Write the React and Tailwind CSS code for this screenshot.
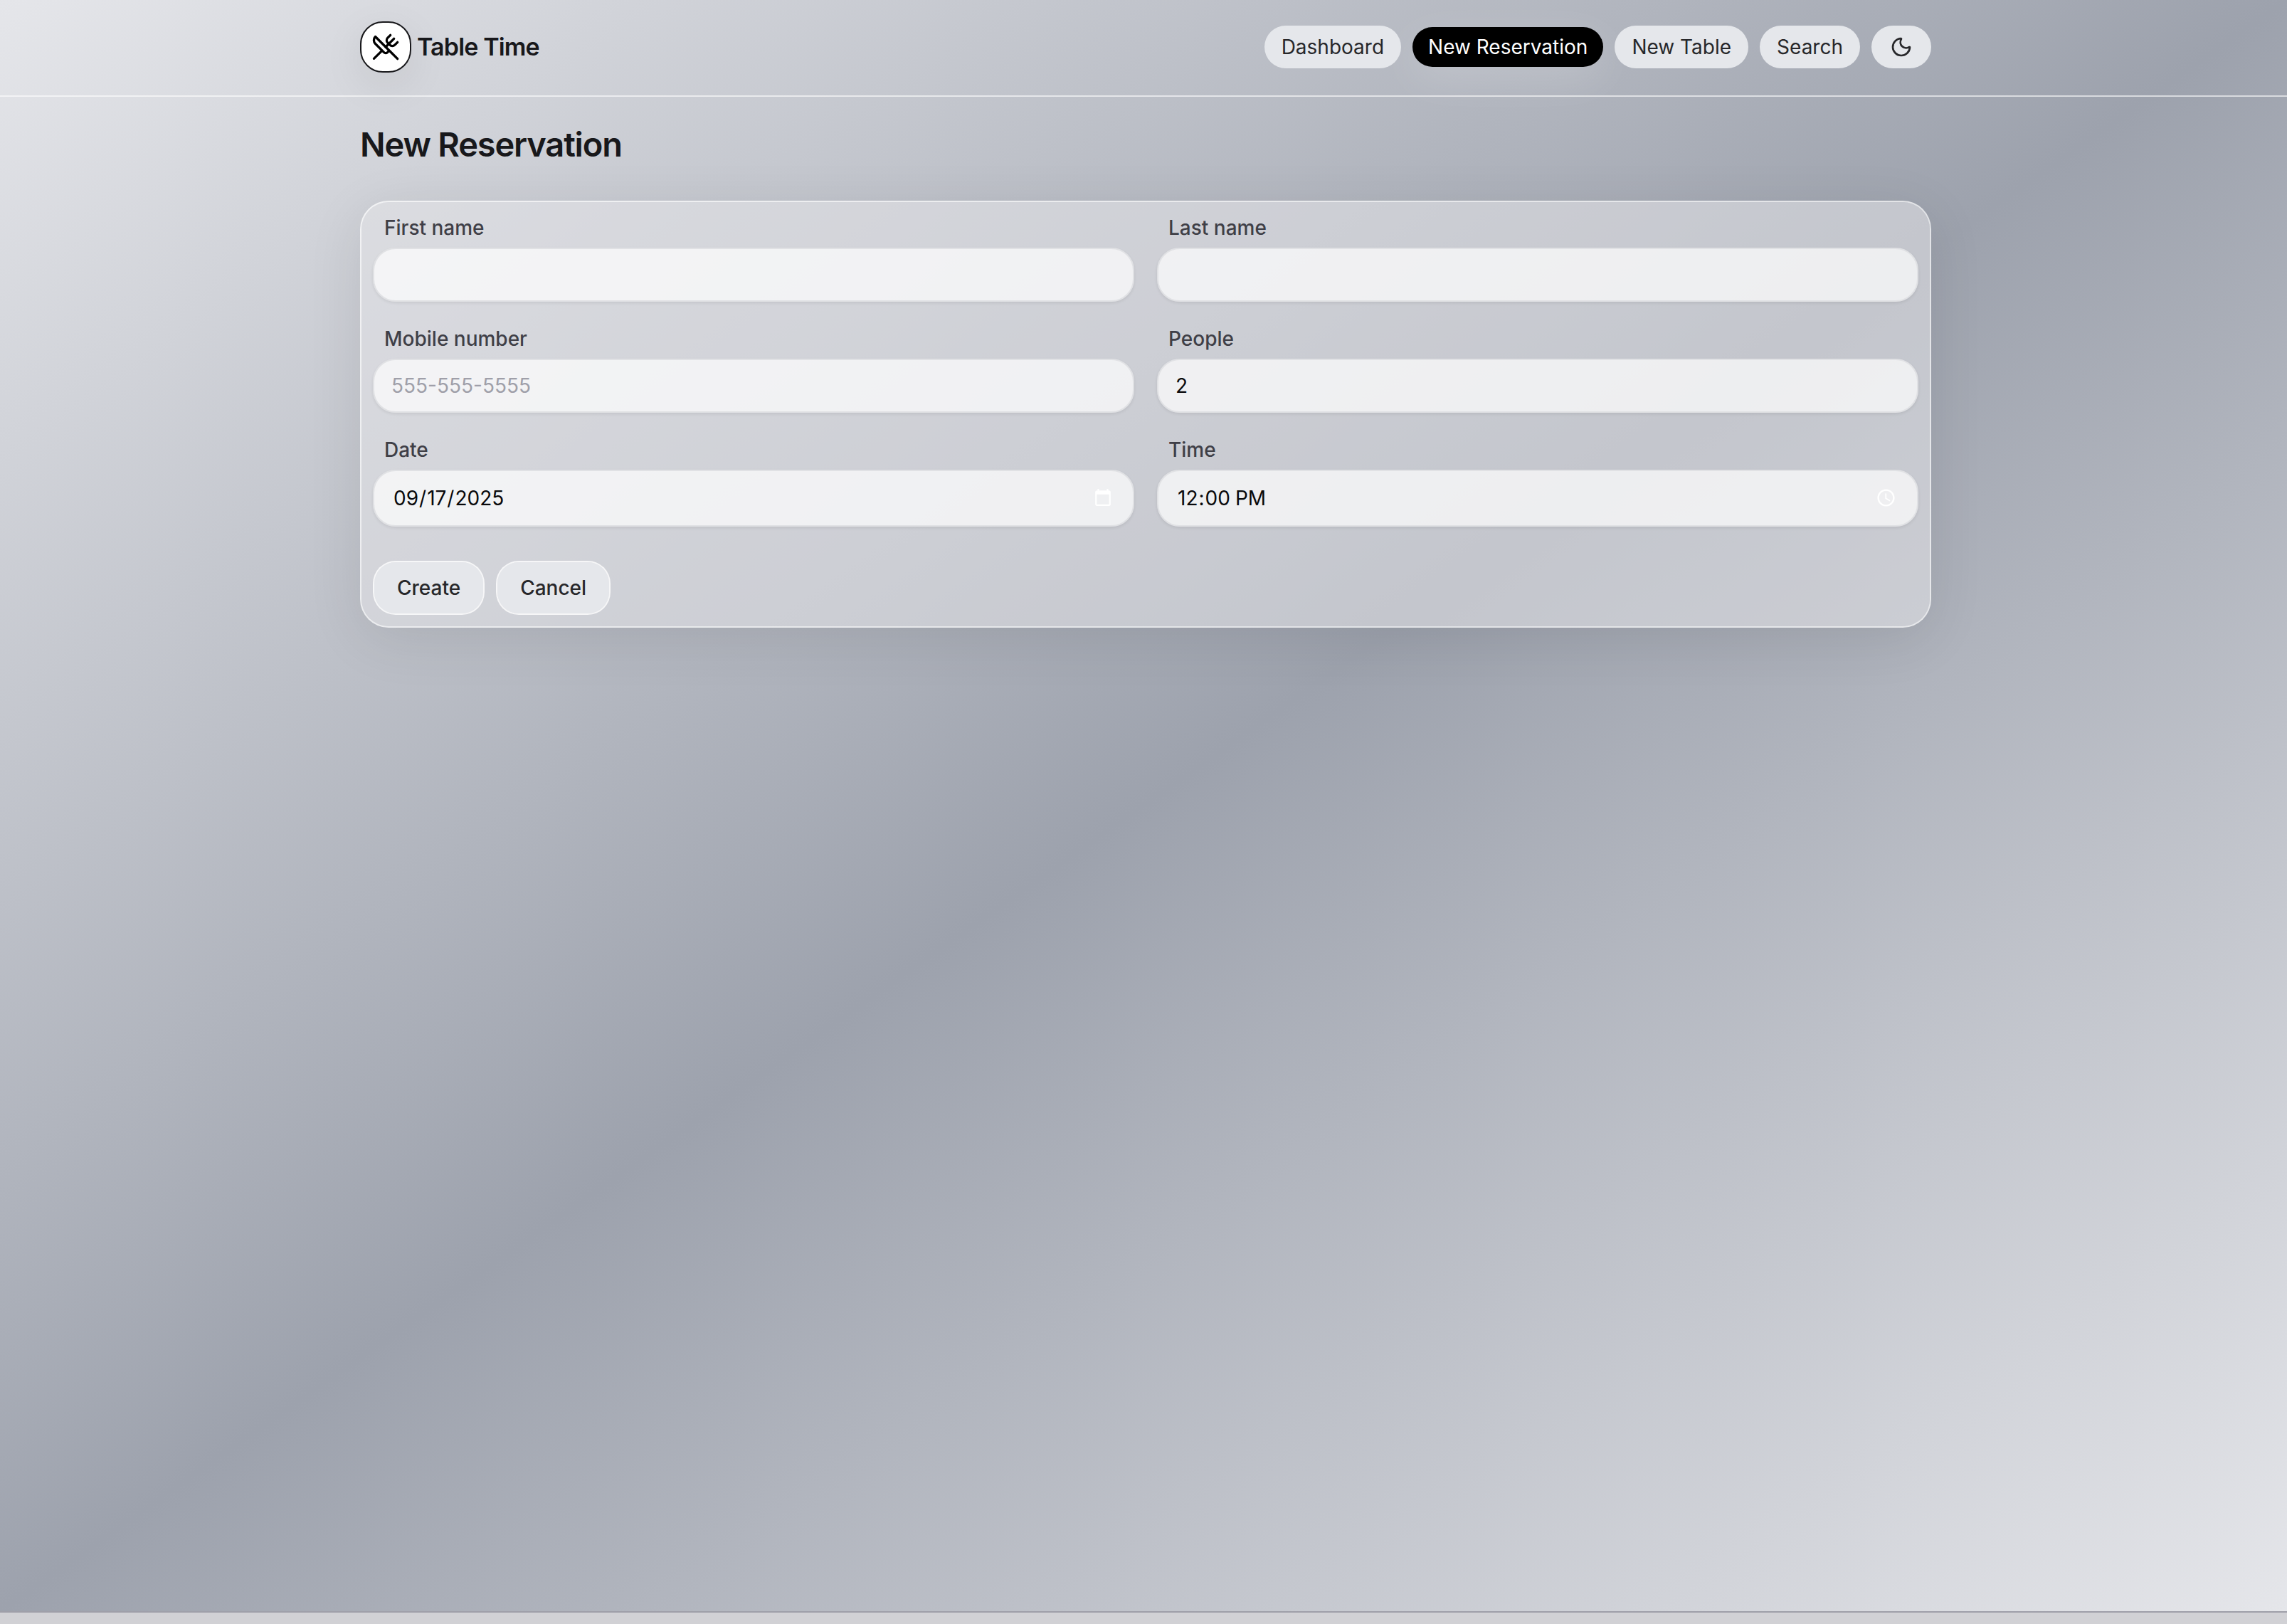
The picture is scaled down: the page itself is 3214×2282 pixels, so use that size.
import { Moon, UtensilsCrossed } from "lucide-react";

const container = "mx-auto w-full max-w-[2310px] pl-[54px] pr-12";
const pill =
  "rounded-full border-2 border-gray-200/60 bg-gray-200 bg-clip-border px-[22px] py-2 text-zinc-800";
const fieldBase =
  "w-full rounded-[32px] border-2 border-[#e0e1e4] bg-white/70 text-[28px] leading-10 text-zinc-950 shadow-[0_2px_4px_rgba(0,0,0,0.08)] outline-none placeholder:text-zinc-400 [&::-webkit-calendar-picker-indicator]:invert";
const button =
  "rounded-[32px] border-2 border-white/80 bg-gray-200 bg-clip-padding px-8 py-4 text-[28px] leading-10 font-medium text-zinc-800";

function Field({ id, label, tall, ...props }) {
  return (
    <div className="flex flex-col gap-2">
      <label htmlFor={id} className="px-4 text-[28px] leading-10 font-medium text-zinc-700">
        {label}
      </label>
      <input id={id} className={`${fieldBase} ${tall ? "h-20 px-[26px]" : "h-[76px] px-6"}`} {...props} />
    </div>
  );
}

export default function App() {
  return (
    <div className="flex min-h-screen flex-col font-['Inter',sans-serif] text-zinc-900">
      <div className="flex-1 bg-linear-to-br/srgb from-[#e5e6ea] via-[#9da2ad] to-[#e5e6ea]">
        <header className="border-b-2 border-white/60">
          <div className={`${container} flex items-center justify-between pt-[30px] pb-8`}>
            <a href="#" className="flex items-center gap-2">
              <span className="flex size-[72px] items-center justify-center rounded-[32px] border-2 border-zinc-900 bg-white text-black shadow-[0_16px_60px_rgba(0,0,0,0.08)]">
                <UtensilsCrossed size={40} />
              </span>
              <span className="text-[34px] leading-10 font-semibold tracking-tight">Table Time</span>
            </a>
            <nav className="flex items-center gap-4 text-[28px] leading-10">
              <a href="#" className={pill}>Dashboard</a>
              <a
                href="#"
                aria-current="page"
                className="rounded-full bg-black px-[22px] py-2 text-white shadow-[0_16px_60px_rgba(255,255,255,0.18)]"
              >
                New Reservation
              </a>
              <a href="#" className={pill}>New Table</a>
              <a href="#" className={pill}>Search</a>
              <button type="button" aria-label="Toggle dark mode" className={`${pill} flex h-[60px] w-[84px] items-center justify-center`}>
                <Moon size={32} />
              </button>
            </nav>
          </div>
        </header>

        <main className={`${container} pt-8`}>
          <h1 className="mb-11 text-[47px] leading-[70px] font-semibold tracking-tight">New Reservation</h1>
          <form
            className="rounded-[40px] border-2 border-white/70 bg-zinc-200/55 bg-clip-padding p-4 shadow-[0_16px_80px_rgba(0,0,0,0.09)]"
            onSubmit={(e) => e.preventDefault()}
          >
            <div className="grid grid-cols-2 gap-8">
              <Field id="first" label="First name" type="text" />
              <Field id="last" label="Last name" type="text" />
              <Field id="mobile" label="Mobile number" type="tel" placeholder="555-555-5555" />
              <Field id="people" label="People" type="number" defaultValue="2" />
              <Field id="date" label="Date" type="date" defaultValue="2025-09-17" tall />
              <Field id="time" label="Time" type="time" defaultValue="12:00" tall />
            </div>
            <div className="mt-12 flex gap-4">
              <button type="submit" className={button}>Create</button>
              <button type="button" className={button}>Cancel</button>
            </div>
          </form>
        </main>
      </div>
      <footer className="h-[18px] border-t-2 border-zinc-400 bg-[#d1d1d5]" />
    </div>
  );
}
